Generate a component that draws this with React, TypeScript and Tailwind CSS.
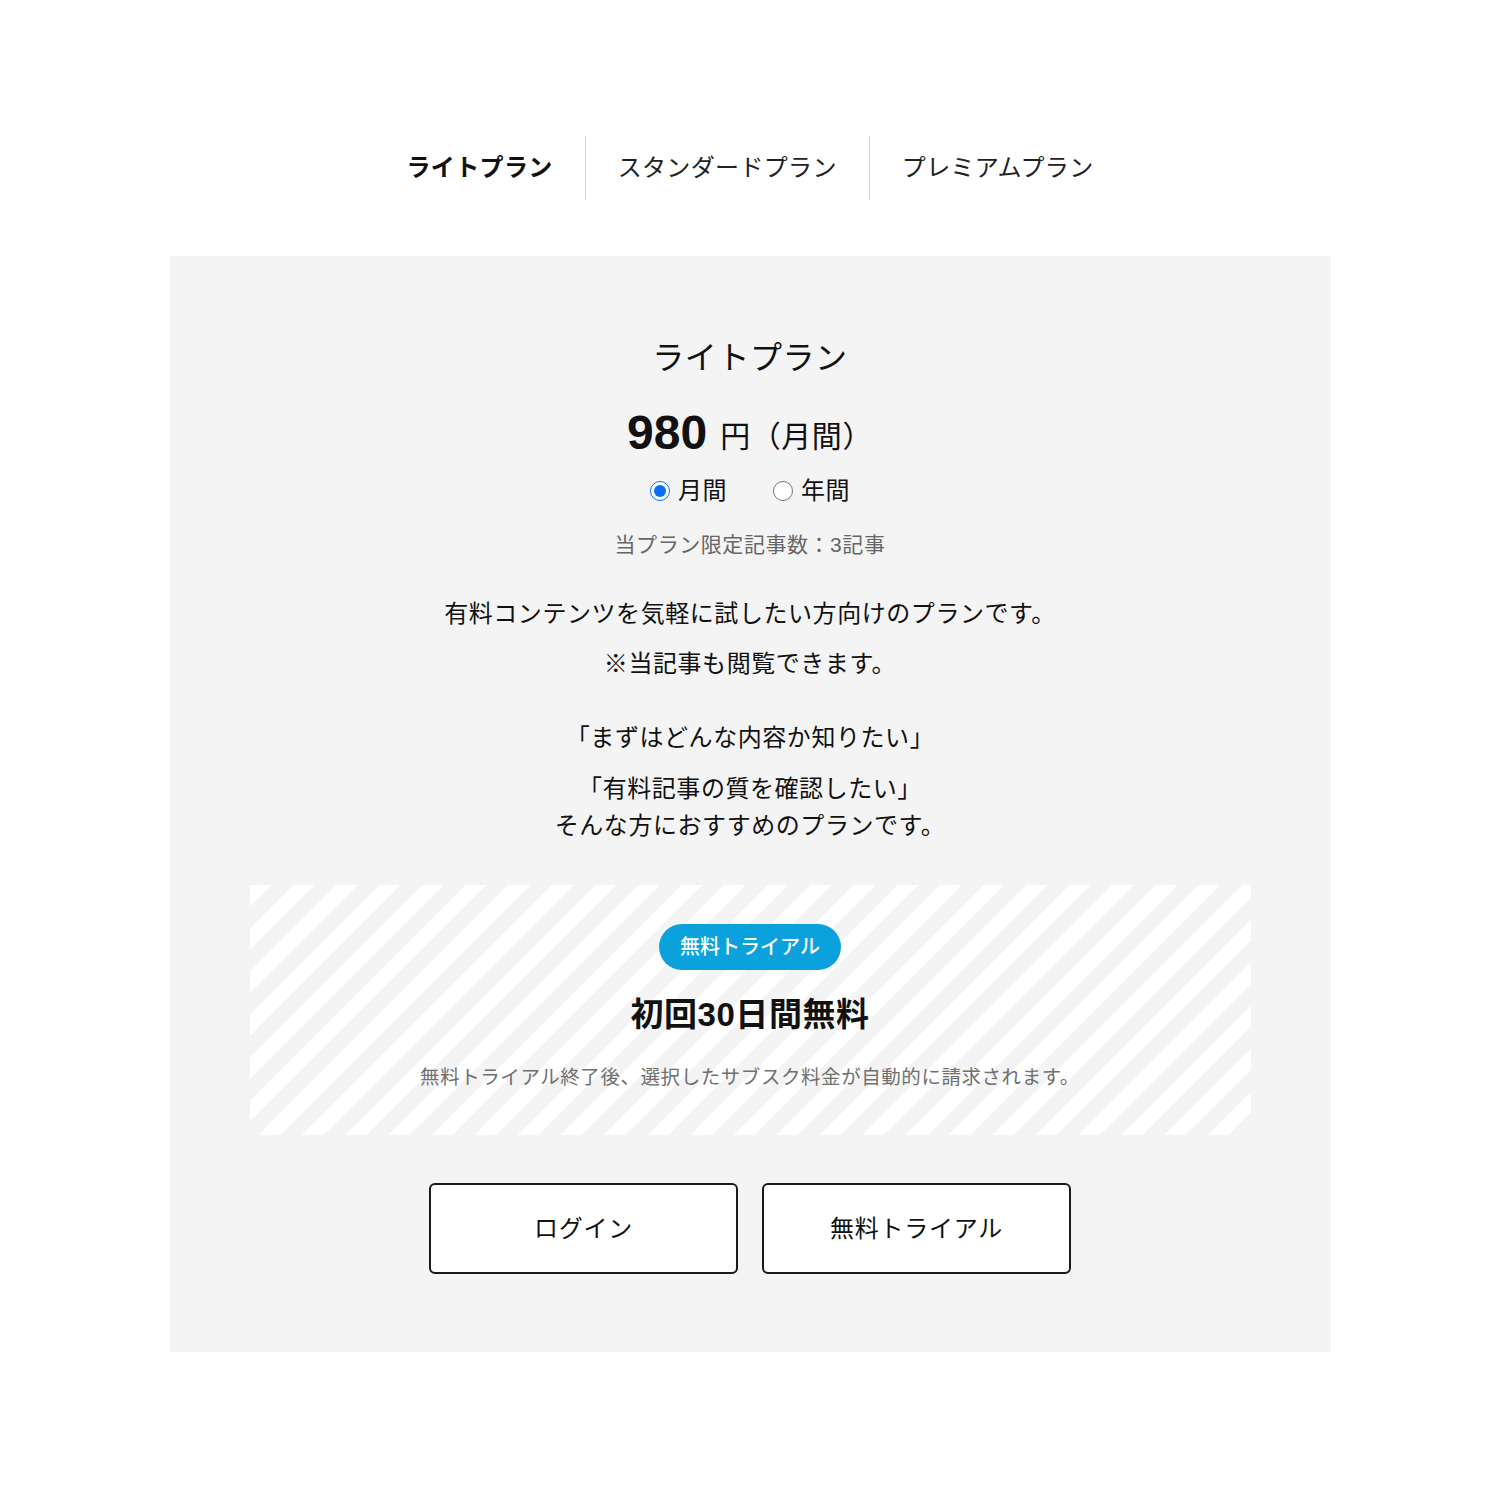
const font = "font-['Liberation_Sans','Noto_Sans_CJK_JP',sans-serif]";

function Tabs() {
  return (
    <div className="flex h-16 items-center justify-center tracking-[0.022em]">
      <div className="px-8 text-[24px] font-bold text-[#111]">ライトプラン</div>
      <div className="h-16 w-px bg-[#d4d4d4]" />
      <div className="px-8 text-[24px] text-[#222]">スタンダードプラン</div>
      <div className="h-16 w-px bg-[#d4d4d4]" />
      <div className="px-8 text-[24px] text-[#222]">プレミアムプラン</div>
    </div>
  );
}

function Radio({ label, checked }: { label: string; checked?: boolean }) {
  return (
    <label className="flex items-center gap-[8px]">
      <input
        type="radio"
        name="term"
        defaultChecked={checked}
        className="m-0 h-[20px] w-[20px] accent-[#0a6cff]"
      />
      <span className="text-[24px] leading-[36px] text-[#111]">{label}</span>
    </label>
  );
}

export default function App() {
  return (
    <div className={`${font} min-h-[1500px] bg-white pt-[136px] tracking-[0.035em] text-[#111]`}>
      <Tabs />

      <div className="mx-auto mt-[56px] flex w-[1161px] flex-col items-center bg-[#f4f4f4] px-20 pb-[78px] pt-[78px]">
        <h2 className="text-[32px] leading-[48px] text-[#111]">ライトプラン</h2>

        <div className="mt-[23px] flex h-[56px] items-center">
          <span className="text-[48px] font-bold tracking-normal">980</span>
          <span className="ml-[13px] mt-[6px] text-[30px]">円（月間）</span>
        </div>

        <div className="mt-3 flex items-center gap-[46px]">
          <Radio label="月間" checked />
          <Radio label="年間" />
        </div>

        <p className="mt-[21px] text-[21px] leading-[30px] text-[#666]">当プラン限定記事数：3記事</p>

        <p className="mt-9 text-[24px] leading-[36px]">有料コンテンツを気軽に試したい方向けのプランです。</p>
        <p className="mt-[14px] text-[24px] leading-[36px]">※当記事も閲覧できます。</p>
        <p className="mt-[38px] text-[24px] leading-[36px]">「まずはどんな内容か知りたい」</p>
        <p className="mt-[14px] text-center text-[24px] leading-[37px]">
          「有料記事の質を確認したい」
          <br />
          そんな方におすすめのプランです。
        </p>

        <div className="mt-[41px] flex h-[250px] w-full flex-col items-center bg-[repeating-linear-gradient(135deg,#ffffff_0px,#ffffff_15px,#f4f4f4_15px,#f4f4f4_30.5px)] pt-[39px]">
          <span className="flex h-[46px] items-center rounded-full bg-[#0aa1dd] px-[21px] text-[20px] font-medium tracking-normal text-white">
            無料トライアル
          </span>
          <p className="mt-[23px] text-[33px] font-bold leading-[44px]">初回30日間無料</p>
          <p className="mt-[25px] text-[19.5px] leading-[30px] text-[#707070]">
            無料トライアル終了後、選択したサブスク料金が自動的に請求されます。
          </p>
        </div>

        <div className="mt-[48px] flex gap-6">
          <button className="flex h-[91px] w-[309px] items-center justify-center rounded-[6px] border-2 border-[#1a1a1a] bg-white text-[24px] tracking-[0.03em] text-[#111]">
            ログイン
          </button>
          <button className="flex h-[91px] w-[309px] items-center justify-center rounded-[6px] border-2 border-[#1a1a1a] bg-white text-[24px] tracking-[0.03em] text-[#111]">
            無料トライアル
          </button>
        </div>
      </div>
    </div>
  );
}
